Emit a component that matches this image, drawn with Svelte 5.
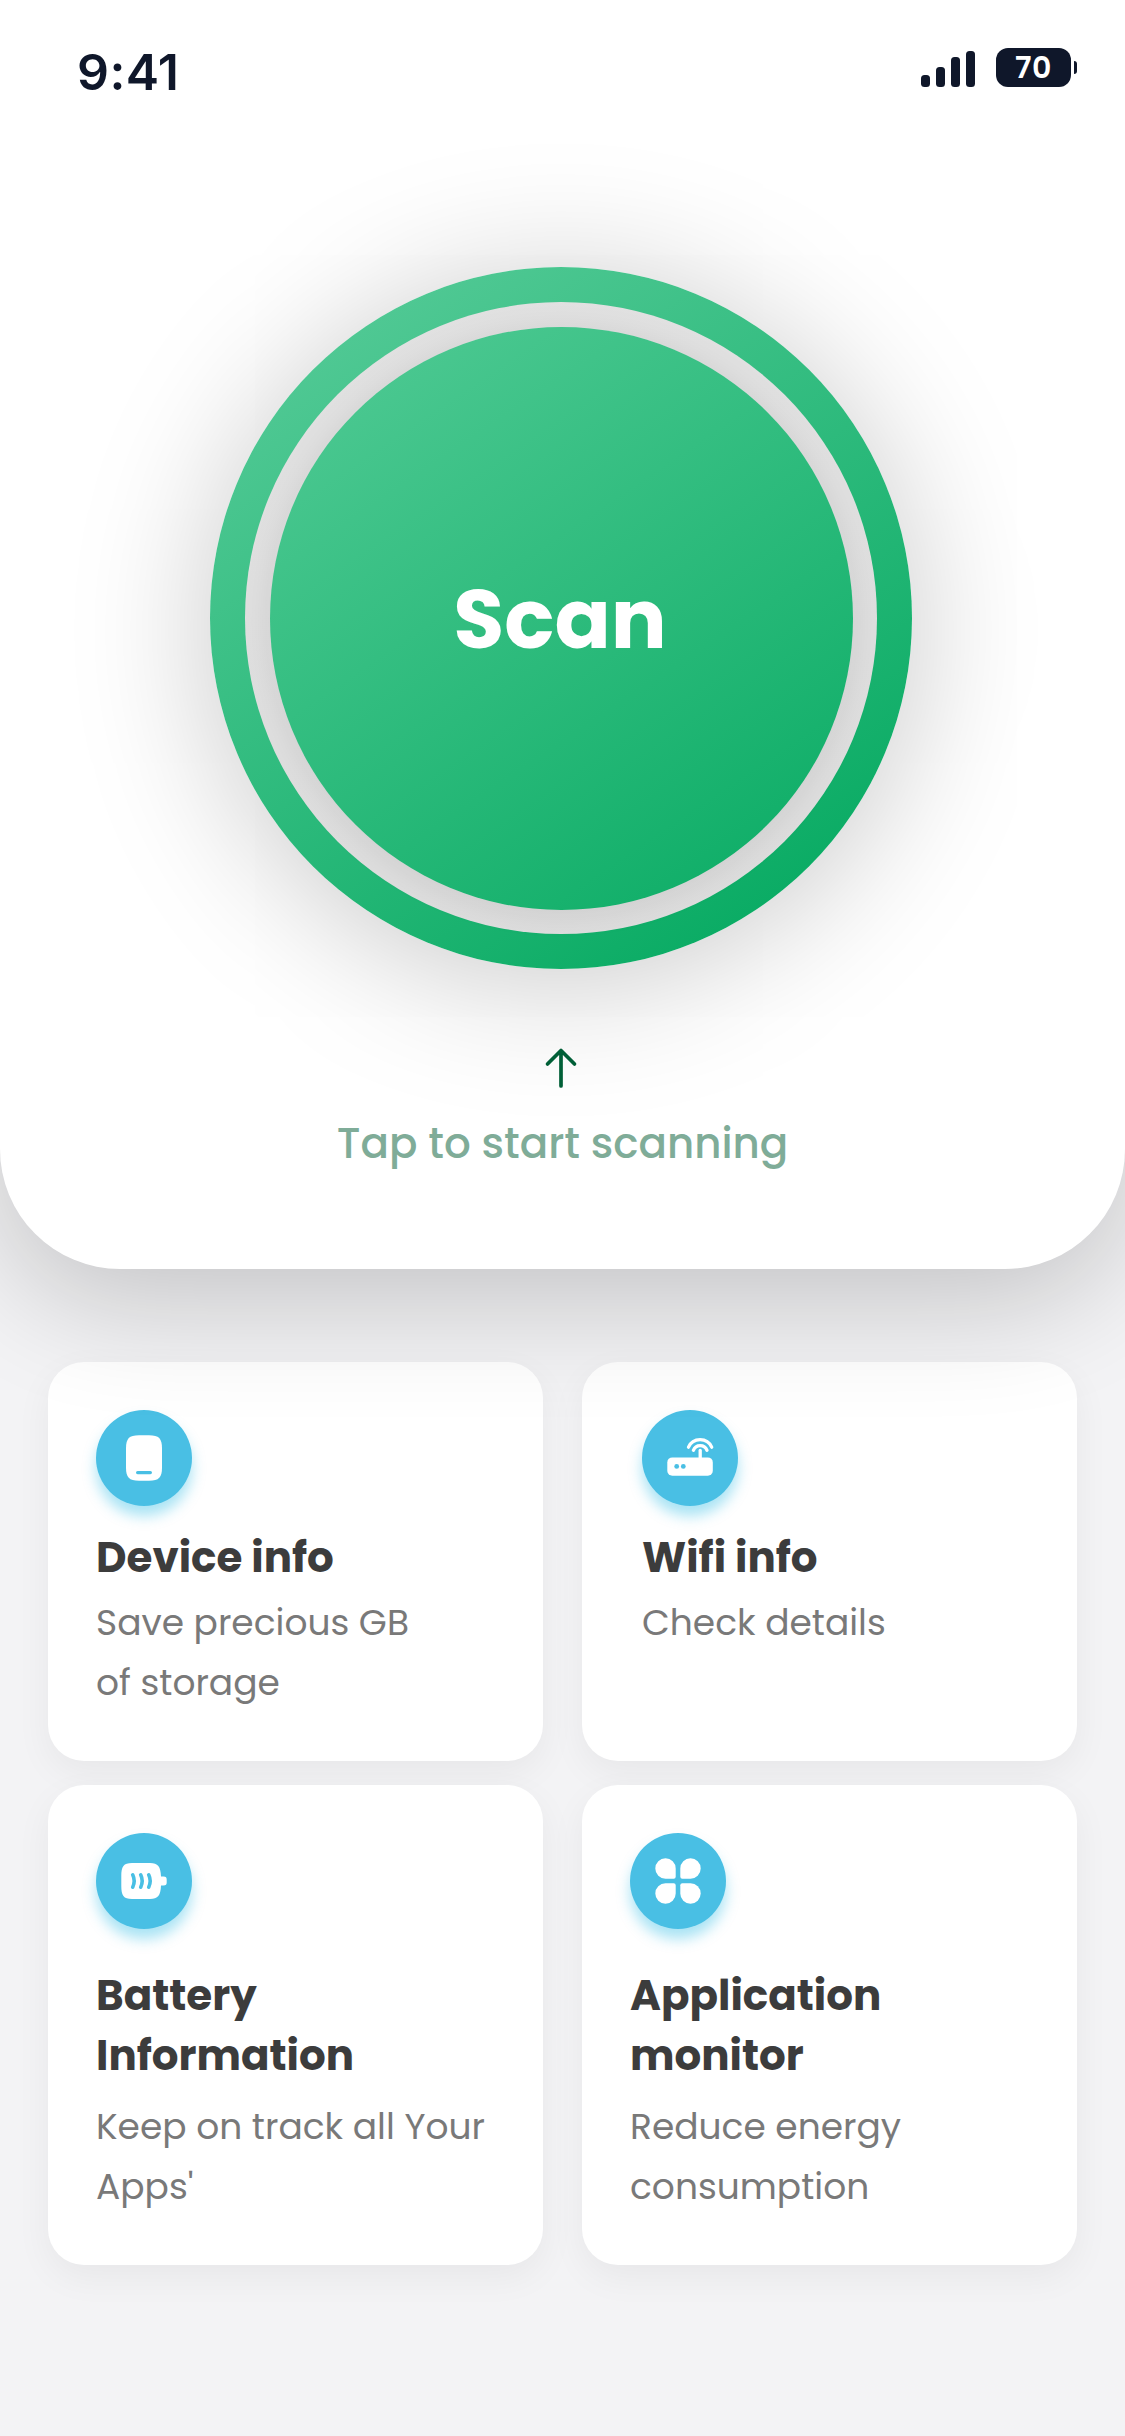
<script>
  const bars = ['b1', 'b2', 'b3', 'b4'];

  const cards = [
    { id: 'device', title: ['Device info'], text: ['Save precious GB', 'of storage'] },
    { id: 'wifi', title: ['Wifi info'], text: ['Check details'] },
    { id: 'battery', title: ['Battery', 'Information'], text: ['Keep on track all Your', "Apps'"] },
    { id: 'apps', title: ['Application', 'monitor'], text: ['Reduce energy', 'consumption'] }
  ];
</script>

<div class="screen">
  <header class="hero">
    <div class="status">
      <span class="time">9:41</span>
      <div class="indicators">
        <div class="signal">
          {#each bars as b}
            <i class={b}></i>
          {/each}
        </div>
        <div class="power">
          <span class="level">70</span>
          <i class="nub"></i>
        </div>
      </div>
    </div>

    <button class="scan">
      <span class="gap"><span class="disc">Scan</span></span>
    </button>

    <svg class="arrow" width="36" height="44" viewBox="0 0 36 44" fill="none">
      <path d="M4.500 18 18 4.500l13.500 13.500M18 4.500V40" stroke="#005f37" stroke-width="3.700" stroke-linecap="round" stroke-linejoin="round" />
    </svg>
    <p class="hint">Tap to start scanning</p>
  </header>

  <main class="grid">
    {#each cards as card}
      <section class="card {card.id}">
        <div class="icon">
          {#if card.id === 'device'}
            <svg viewBox="0 0 96 96">
              <path fill="#fff" d="M43 25.300H53C63 25.300 66 28.500 66 38.500V57.500C66 67.500 63 70.700 53 70.700H43C33 70.700 30 67.500 30 57.500V38.500C30 28.500 33 25.300 43 25.300Z" />
              <path d="M41.600 62.600H54.400" stroke="#49bfe4" stroke-width="3.200" stroke-linecap="round" />
            </svg>
          {:else if card.id === 'wifi'}
            <svg viewBox="0 0 96 96">
              <rect x="25.300" y="47.400" width="45.500" height="18.300" rx="5" fill="#fff" />
              <g fill="none" stroke="#fff" stroke-width="3.300" stroke-linecap="round">
                <path d="M58.200 49V40.500" />
                <path d="M46.500 37.200A12.700 12.700 0 0 1 69.700 37.200" />
                <path d="M51.400 40.300A7.300 7.300 0 0 1 65 40.300" />
              </g>
              <circle cx="34.700" cy="56.400" r="2.400" fill="#49bfe4" />
              <circle cx="41.300" cy="56.400" r="2.400" fill="#49bfe4" />
            </svg>
          {:else if card.id === 'battery'}
            <svg viewBox="0 0 96 96">
              <path fill="#fff" d="M36 30H54C62 30 64.600 33.500 65 43.500H67.500C70 43.500 70.700 44.500 70.700 46.500V49.500C70.700 51.500 70 52.500 67.500 52.500H65C64.600 62.500 62 66 54 66H36C27.500 66 25.300 62.500 25.300 53V43C25.300 33.500 27.500 30 36 30Z" />
              <g fill="none" stroke="#49bfe4" stroke-width="3.600" stroke-linecap="round">
                <path d="M36.700 41.800Q39.700 48 36.700 54.200" />
                <path d="M44.700 41.800Q47.700 48 44.700 54.200" />
                <path d="M52.700 41.800Q55.700 48 52.700 54.200" />
              </g>
            </svg>
          {:else}
            <svg viewBox="0 0 96 96" fill="#fff">
              <path d="M35.500 25.300A10.200 10.200 0 0 1 45.700 35.500V43.700Q45.700 45.700 43.700 45.700H35.500A10.200 10.200 0 0 1 35.500 25.300Z" />
              <path d="M60.500 25.300A10.200 10.200 0 0 0 50.300 35.500V43.700Q50.300 45.700 52.300 45.700H60.500A10.200 10.200 0 0 0 60.500 25.300Z" />
              <path d="M35.500 70.700A10.200 10.200 0 0 0 45.700 60.500V52.300Q45.700 50.300 43.700 50.300H35.500A10.200 10.200 0 0 0 35.500 70.700Z" />
              <path d="M60.500 70.700A10.200 10.200 0 0 1 50.300 60.500V52.300Q50.300 50.300 52.300 50.300H60.500A10.200 10.200 0 0 1 60.500 70.700Z" />
            </svg>
          {/if}
        </div>
        <h2>
          {#each card.title as line}
            <span>{line}</span>
          {/each}
        </h2>
        <p>
          {#each card.text as line}
            <span>{line}</span>
          {/each}
        </p>
      </section>
    {/each}
  </main>
</div>

<style>
  :global(body) {
    margin: 0;
    background: #f3f3f5;
  }
  .screen {
    width: 1125px;
    height: 2436px;
    overflow: hidden;
    background: #f3f3f5;
    font-family: Poppins, Inter, 'Liberation Sans', sans-serif;
    font-variant-ligatures: none;
  }
  .hero {
    position: relative;
    z-index: 1;
    box-sizing: border-box;
    height: 1269px;
    display: flex;
    flex-direction: column;
    align-items: center;
    background: #fff;
    border-radius: 0 0 120px 120px;
    box-shadow: 0 32px 120px rgba(0, 0, 0, 0.2);
  }
  .status {
    align-self: stretch;
    box-sizing: border-box;
    height: 132px;
    padding: 42px 48px 0 77px;
    display: flex;
    justify-content: space-between;
    align-items: flex-start;
    color: #0f172a;
    font-family: Inter, 'Liberation Sans', sans-serif;
  }
  .time {
    font-size: 50px;
    line-height: 60px;
    font-weight: 600;
    letter-spacing: 0.4px;
  }
  .indicators {
    display: flex;
    align-items: flex-end;
    gap: 21px;
    padding-top: 6px;
  }
  .signal {
    display: flex;
    align-items: flex-end;
    gap: 6px;
    height: 39px;
  }
  .signal i {
    width: 9px;
    border-radius: 3.5px;
    background: #0f172a;
  }
  .b1 {
    height: 12px;
  }
  .b2 {
    height: 20px;
  }
  .b3 {
    height: 30px;
  }
  .b4 {
    height: 36px;
  }
  .power {
    display: flex;
    align-items: center;
    gap: 3px;
  }
  .level {
    width: 75px;
    height: 39px;
    border-radius: 12px;
    background: #0f172a;
    color: #fff;
    font-family: Poppins, Inter, sans-serif;
    font-size: 30px;
    line-height: 39px;
    font-weight: 600;
    letter-spacing: 0.5px;
    text-align: center;
  }
  .nub {
    width: 3px;
    height: 13px;
    border-radius: 0 3px 3px 0;
    background: #0f172a;
  }
  .scan {
    box-sizing: border-box;
    width: 702px;
    height: 702px;
    margin: 135px 3px 0 0;
    padding: 35px;
    border: 0;
    border-radius: 50%;
    background: linear-gradient(146deg, #56cb98 6%, #04a960 94%);
    box-shadow: 0 12px 140px rgba(0, 0, 0, 0.22);
    font: inherit;
    font-variant-ligatures: none;
  }
  .gap {
    display: flex;
    align-items: center;
    justify-content: center;
    width: 632px;
    height: 632px;
    border-radius: 50%;
    background: linear-gradient(170deg, #e1e1e1, #dcdcdc);
  }
  .disc {
    box-sizing: border-box;
    width: 583px;
    height: 583px;
    padding-top: 1px;
    display: flex;
    align-items: center;
    justify-content: center;
    border-radius: 50%;
    background: linear-gradient(146deg, #50ca94 4%, #08ab63 100%);
    box-shadow: 0 3px 30px rgba(0, 0, 0, 0.08);
    color: #fff;
    font-size: 83px;
    font-weight: 700;
    text-indent: -2px;
  }
  .arrow {
    margin: 77px 3px 0 0;
  }
  .hint {
    margin: 24px 0 0;
    font-size: 42px;
    line-height: 60px;
    font-weight: 500;
    color: #7fac98;
  }
  .grid {
    display: grid;
    grid-template-columns: 495px 495px;
    grid-template-rows: 399px 480px;
    gap: 24px 39px;
    padding: 93px 48px 0;
  }
  .card {
    border-radius: 36px;
    padding: 48px 48px 0;
    background: #fff;
    box-shadow: 0 12px 36px rgba(0, 0, 0, 0.05);
  }
  .wifi {
    padding-left: 60px;
  }
  .icon {
    width: 96px;
    height: 96px;
    border-radius: 50%;
    background: #49bfe4;
    box-shadow: 0 10px 14px rgba(0, 173, 223, 0.34);
  }
  .icon svg {
    display: block;
    width: 96px;
    height: 96px;
  }
  h2,
  p {
    margin: 0;
    white-space: nowrap;
  }
  h2 {
    margin-top: 22px;
    font-size: 42px;
    line-height: 60px;
    font-weight: 700;
    color: #3c3c3c;
  }
  .card p {
    margin-top: 5px;
    font-size: 36px;
    line-height: 60px;
    color: #797979;
  }
  .battery h2,
  .apps h2 {
    margin-top: 37px;
  }
  .battery p,
  .apps p {
    margin-top: 11px;
  }
  h2 span,
  p span {
    display: block;
  }
</style>
